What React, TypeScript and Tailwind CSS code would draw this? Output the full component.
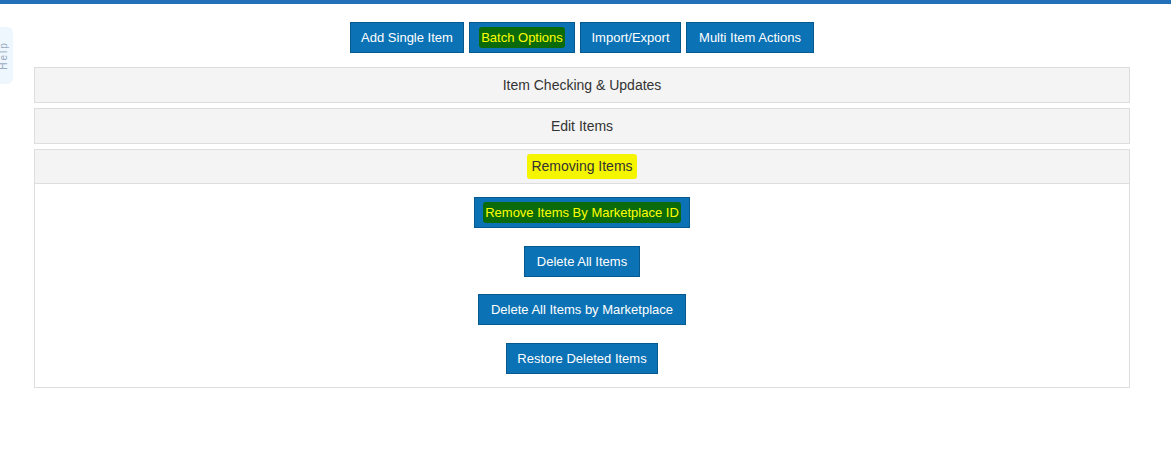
import React from 'react';

const font = { fontFamily: '"Liberation Sans", Arial, sans-serif' };

const Btn: React.FC<{ children: React.ReactNode; w: string }> = ({ children, w }) => (
  <button className={`h-[31px] ${w} px-0 bg-[#0b72b5] border border-[#05598f] text-white text-[13px] leading-none whitespace-nowrap`}>
    {children}
  </button>
);

const Mark: React.FC<{ children: React.ReactNode }> = ({ children }) => (
  <span className="bg-[#0b6b0b] text-[#ffff00] px-[2px] py-[3px] rounded-[3px]">{children}</span>
);

const PanelHead: React.FC<{ children: React.ReactNode; last?: boolean }> = ({ children, last }) => (
  <div className={`h-[34px] flex items-center justify-center bg-[#f4f4f4] border-[#dddddd] text-[14px] text-[#333333] ${last ? 'border-b' : ''}`}>
    {children}
  </div>
);

export default function App() {
  return (
    <div className="min-h-[469px] bg-white relative" style={font}>
      <div className="h-1 bg-[#2271b8]" />

      {/* side help tab, half hidden off the left edge */}
      <div className="absolute left-0 top-[27px] w-[13px] h-[57px] bg-[#eef6fe] rounded-r-[6px] overflow-hidden flex items-center justify-start">
        <span className="-rotate-90 text-[10px] text-[#9aabbf] tracking-[2px] -ml-[11px] whitespace-nowrap">Help</span>
      </div>

      <div className="ml-[34px] mr-[41px]">
        <div className="flex justify-center gap-[5px] mt-[18px]">
          <Btn w="w-[114px]">Add Single Item</Btn>
          <Btn w="w-[106px]">
            <Mark>Batch Options</Mark>
          </Btn>
          <Btn w="w-[101px]">Import/Export</Btn>
          <Btn w="w-[128px]">Multi Item Actions</Btn>
        </div>

        <div className="mt-[14px] flex flex-col gap-[5px]">
          <div className="border border-[#dddddd]">
            <PanelHead>Item Checking &amp; Updates</PanelHead>
          </div>
          <div className="border border-[#dddddd]">
            <PanelHead>Edit Items</PanelHead>
          </div>
          <div className="border border-[#dddddd]">
            <PanelHead last>
              <span className="bg-[#f5f500] px-[4px] py-[2px] rounded-[3px]">Removing Items</span>
            </PanelHead>
            <div className="flex flex-col items-center pt-[13px] pb-[13px] gap-[17.5px]">
              <Btn w="w-[216px]">
                <Mark>Remove Items By Marketplace ID</Mark>
              </Btn>
              <Btn w="w-[116px]">Delete All Items</Btn>
              <Btn w="w-[208px]">Delete All Items by Marketplace</Btn>
              <Btn w="w-[152px]">Restore Deleted Items</Btn>
            </div>
          </div>
        </div>
      </div>
    </div>
  );
}
